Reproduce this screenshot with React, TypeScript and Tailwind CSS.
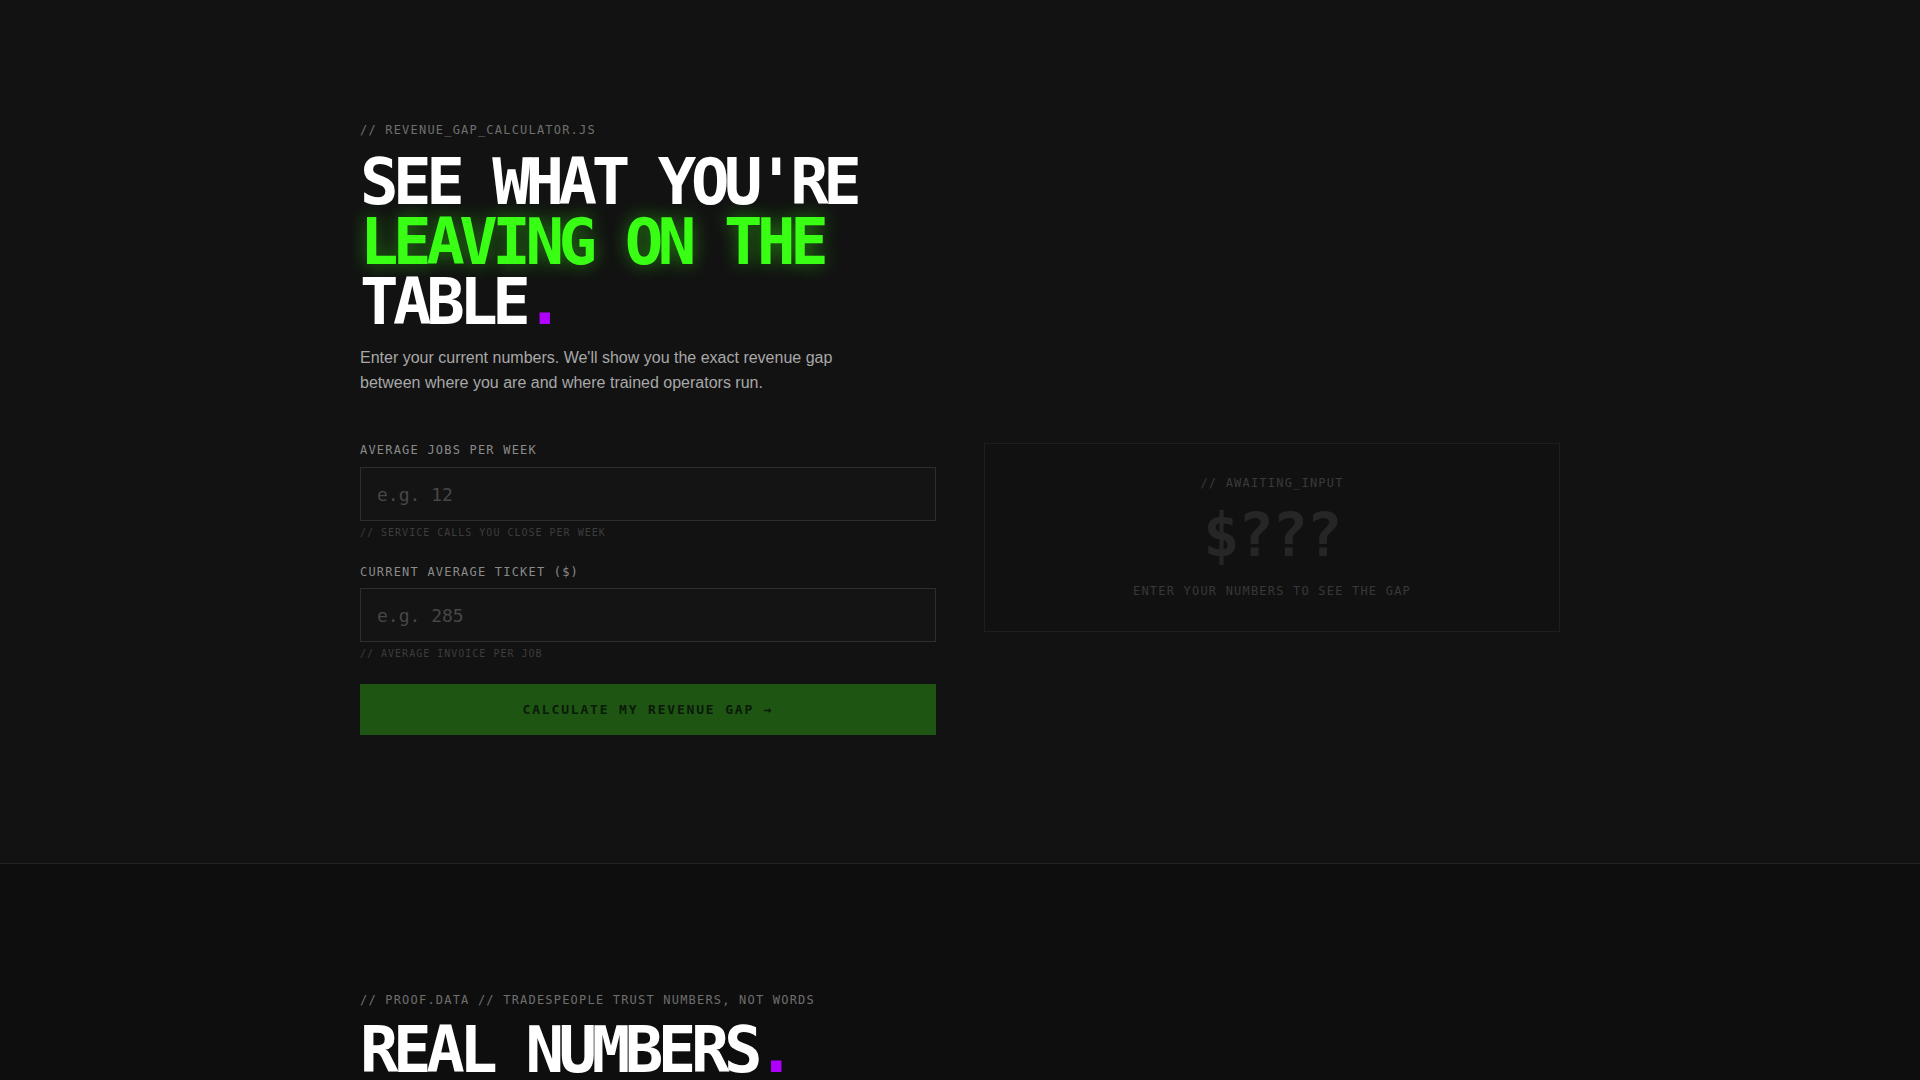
import React from "react";

const mono = "font-['DejaVu_Sans_Mono',monospace]";

export default function App() {
  return (
    <div className="min-h-screen bg-[#0e0e0e] font-['Liberation_Sans',Arial,sans-serif]">
      <section className="border-b border-[#222] bg-[#121212] pt-[122px] pb-[128px]">
        <div className="mx-auto w-[1200px]">
          <div className={`${mono} text-[12px] leading-[16px] tracking-[0.1em] text-[#6f6f6f]`}>
            // REVENUE_GAP_CALCULATOR.JS
          </div>
          <h1
            className={`${mono} mt-[14px] text-[64px] font-bold leading-[60px] tracking-[-0.085em] text-white`}
          >
            SEE WHAT YOU'RE
            <br />
            <span className="text-[#39ff14] [text-shadow:0_0_18px_rgba(57,255,20,0.45)]">
              LEAVING ON THE
            </span>
            <br />
            TABLE<span className="text-[#b000ff]">.</span>
          </h1>
          <p className="mt-[14px] max-w-[500px] text-[16px] leading-[24.5px] text-[#a8a8a8]">
            Enter your current numbers. We'll show you the exact revenue gap between where you are
            and where trained operators run.
          </p>

          <div className="mt-[47px] grid grid-cols-2 items-start gap-[48px]">
            <div className="flex flex-col">
              <div className="flex flex-col gap-6">
                <div className="flex flex-col">
                  <label className={`${mono} text-[12px] leading-[16px] tracking-[0.1em] text-[#8a8a8a]`}>
                    AVERAGE JOBS PER WEEK
                  </label>
                  <input
                    type="number"
                    placeholder="e.g. 12"
                    className={`${mono} mt-[9px] h-[54px] w-full border border-[#2e2e2e] bg-[#141414] px-4 text-[18px] text-white outline-none placeholder:text-[#474747]`}
                  />
                  <div className={`${mono} mt-[5px] text-[10px] leading-[14px] tracking-[0.1em] text-[#3d3d3d]`}>
                    // SERVICE CALLS YOU CLOSE PER WEEK
                  </div>
                </div>
                <div className="flex flex-col">
                  <label className={`${mono} text-[12px] leading-[16px] tracking-[0.1em] text-[#8a8a8a]`}>
                    CURRENT AVERAGE TICKET ($)
                  </label>
                  <input
                    type="number"
                    placeholder="e.g. 285"
                    className={`${mono} mt-[8px] h-[54px] w-full border border-[#2e2e2e] bg-[#141414] px-4 text-[18px] text-white outline-none placeholder:text-[#474747]`}
                  />
                  <div className={`${mono} mt-[5px] text-[10px] leading-[14px] tracking-[0.1em] text-[#3d3d3d]`}>
                    // AVERAGE INVOICE PER JOB
                  </div>
                </div>
              </div>
              <button
                className={`${mono} mt-[23px] h-[51px] w-full bg-[#1e5513] text-[13px] font-bold tracking-[0.14em] text-[#0b1a08]`}
              >
                CALCULATE MY REVENUE GAP →
              </button>
            </div>

            <div className="mt-[1px] flex h-[189px] flex-col items-center border border-[#1f1f1f] bg-[#111111] pt-[31px]">
              <div className={`${mono} text-[12px] leading-[16px] tracking-[0.1em] text-[#3a3a3a]`}>
                // AWAITING_INPUT
              </div>
              <div className={`${mono} mt-[14px] text-[60px] font-bold leading-[60px] tracking-[-0.03em] text-[#262626]`}>
                $???
              </div>
              <div className={`${mono} mt-[18px] text-[12px] leading-[16px] tracking-[0.1em] text-[#383838]`}>
                ENTER YOUR NUMBERS TO SEE THE GAP
              </div>
            </div>
          </div>
        </div>
      </section>

      <section className="bg-[#0e0e0e] pt-[128px] pb-[120px]">
        <div className="mx-auto w-[1200px]">
          <div className={`${mono} text-[12px] leading-[16px] tracking-[0.1em] text-[#6f6f6f]`}>
            // PROOF.DATA // TRADESPEOPLE TRUST NUMBERS, NOT WORDS
          </div>
          <h2
            className={`${mono} mt-[12px] text-[64px] font-bold leading-[60px] tracking-[-0.085em] text-white`}
          >
            REAL NUMBERS<span className="text-[#b000ff]">.</span>
          </h2>
        </div>
      </section>
    </div>
  );
}
